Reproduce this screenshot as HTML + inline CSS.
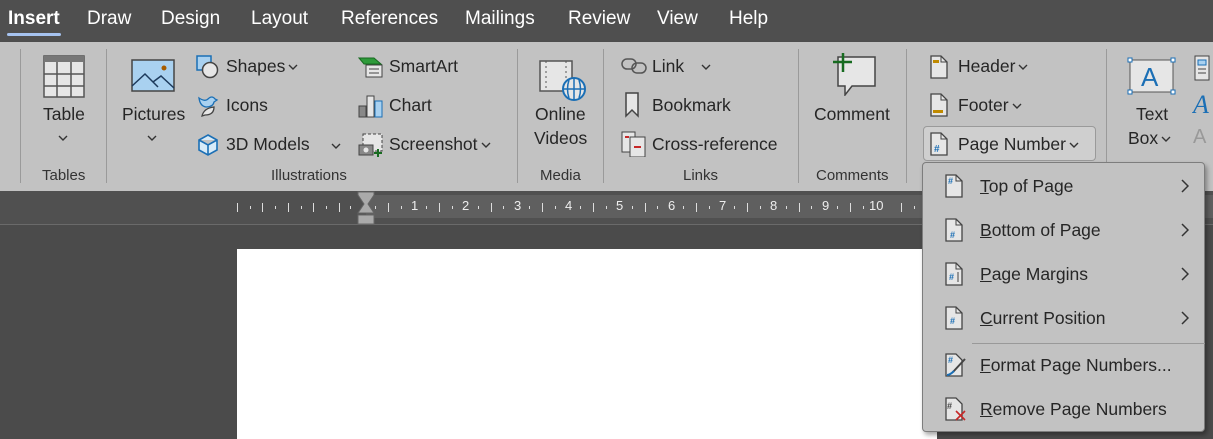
<!DOCTYPE html>
<html><head><style>
*{margin:0;padding:0;box-sizing:border-box}
body{width:1213px;height:439px;overflow:hidden;background:#4b4b4b;font-family:"Segoe UI","Liberation Sans",sans-serif;position:relative;color:#262626}
.a{position:absolute;white-space:nowrap}
.tabs{position:absolute;left:0;top:0;width:1213px;height:42px;background:#4f4f4f}
.tab{position:absolute;top:8px;font-size:19px;color:#fff}
.rib{position:absolute;left:0;top:42px;width:1213px;height:149px;background:#c2c2c2;box-shadow:0 2px 3px rgba(0,0,0,.4)}
.t{font-size:17.5px;color:#262626}
.g{font-size:15px;color:#333}
.sep{position:absolute;top:49px;width:1px;height:134px;background:#9a9a9a}
.ruler{position:absolute;left:0;top:191px;width:1213px;height:34px;background:#505050;border-bottom:1px solid #6a6a6a}
.num{position:absolute;top:198px;font-size:13px;color:#eee;font-family:"Liberation Sans",sans-serif}
.menu{position:absolute;left:922px;top:162px;width:283px;height:270px;background:#c2c2c2;border:1px solid #7d7d7d;border-radius:4px;box-shadow:2px 3px 5px rgba(0,0,0,.35)}
.mi{position:absolute;left:57px;font-size:17.5px;color:#262626}
.mi u{text-decoration:underline}
.chev{position:absolute;left:258px}
.cv{display:inline-block;vertical-align:middle;margin-left:3px}
</style></head><body>
<svg width="0" height="0" style="position:absolute"><defs><symbol id="dn" viewBox="0 0 10 6"><path d="M1 1L5 5L9 1" fill="none" stroke="#333" stroke-width="1.4"/></symbol><symbol id="rt" viewBox="0 0 8 14"><path d="M1 1L7 7L1 13" fill="none" stroke="#333" stroke-width="1.5"/></symbol></defs></svg>
<div class="tabs"></div>
<div class="tab" style="left:8px;font-weight:bold">Insert</div>
<div class="a" style="left:7px;top:33px;width:54px;height:3px;background:#a6c3f0;border-radius:2px"></div>
<div class="tab" style="left:87px">Draw</div>
<div class="tab" style="left:161px">Design</div>
<div class="tab" style="left:251px">Layout</div>
<div class="tab" style="left:341px">References</div>
<div class="tab" style="left:465px">Mailings</div>
<div class="tab" style="left:568px">Review</div>
<div class="tab" style="left:657px">View</div>
<div class="tab" style="left:729px">Help</div>

<div class="rib"></div>
<div class="sep" style="left:20px"></div>
<div class="sep" style="left:106px"></div>
<div class="sep" style="left:517px"></div>
<div class="sep" style="left:603px"></div>
<div class="sep" style="left:798px"></div>
<div class="sep" style="left:906px"></div>
<div class="sep" style="left:1106px"></div>

<!-- Table -->
<svg class="a" style="left:43px;top:55px" width="42" height="43"><rect x="1" y="1" width="40" height="41" fill="#e6e6e6" stroke="#555" stroke-width="1.5"/><rect x="1" y="1" width="40" height="6" fill="#777"/><path d="M14 7V42M28 7V42M1 19H41M1 31H41" stroke="#555" stroke-width="1.5"/></svg>
<div class="a t" style="left:43px;top:104px">Table</div>
<svg class="a" style="left:58px;top:135px" width="10" height="6"><use href="#dn"/></svg>
<div class="a g" style="left:42px;top:167px">Tables</div>

<!-- Pictures -->
<svg class="a" style="left:131px;top:59px" width="44" height="33"><rect x="1" y="1" width="42" height="31" fill="#a9d1f0" stroke="#444" stroke-width="1.5"/><path d="M1 27L14 15L27 28M22 23L30 17L43 29" fill="none" stroke="#1d3a5c" stroke-width="1.5"/><circle cx="33" cy="9" r="2.5" fill="#a65c00"/></svg>
<div class="a t" style="left:122px;top:104px">Pictures</div>
<svg class="a" style="left:147px;top:135px" width="10" height="6"><use href="#dn"/></svg>

<svg class="a" style="left:196px;top:55px" width="24" height="24"><rect x="1" y="1" width="14" height="14" fill="#a9d1f0" stroke="#1b6fb5" stroke-width="1.5"/><circle cx="14" cy="15" r="7.5" fill="#e6e6e6" stroke="#444" stroke-width="1.5"/></svg>
<div class="a t" style="left:226px;top:56px">Shapes<svg class="cv" width="10" height="6"><use href="#dn"/></svg></div>
<svg class="a" style="left:196px;top:94px" width="24" height="24"><path d="M3 4Q9 8 12 5Q16 1 19 5L21 6L18 8Q17 13 10 13Q4 12 3 4Z" fill="#a9d1f0" stroke="#1b6fb5" stroke-width="1.3"/><path d="M6 22Q8 14 18 13Q18 21 9 21Z" fill="#e6e6e6" stroke="#444" stroke-width="1.3"/></svg>
<div class="a t" style="left:226px;top:95px">Icons</div>
<svg class="a" style="left:196px;top:133px" width="24" height="24"><path d="M12 2L21 7V17L12 22L3 17V7Z M3 7L12 12L21 7M12 12V22" fill="#d8ebf8" stroke="#1b6fb5" stroke-width="1.6"/></svg>
<div class="a t" style="left:226px;top:134px">3D Models</div>
<svg class="a" style="left:331px;top:143px" width="10" height="6"><use href="#dn"/></svg>

<svg class="a" style="left:358px;top:56px" width="26" height="22"><path d="M1 2H16L23 8H6Z" fill="#2e9a3a" stroke="#176b20"/><rect x="8" y="9" width="16" height="12" fill="#e6e6e6" stroke="#444"/><path d="M11 13H21M11 17H21" stroke="#444"/></svg>
<div class="a t" style="left:389px;top:56px">SmartArt</div>
<svg class="a" style="left:358px;top:93px" width="26" height="25"><rect x="1" y="13" width="7" height="11" fill="#888" stroke="#444"/><rect x="9" y="3" width="7" height="21" fill="#e6e6e6" stroke="#444"/><rect x="17" y="8" width="7" height="16" fill="#a9d1f0" stroke="#1b6fb5"/></svg>
<div class="a t" style="left:389px;top:95px">Chart</div>
<svg class="a" style="left:358px;top:132px" width="26" height="25"><rect x="5" y="2" width="19" height="17" fill="#e6e6e6" stroke="#444" stroke-dasharray="3 2"/><rect x="1" y="13" width="14" height="10" fill="#888" stroke="#444"/><circle cx="8" cy="18" r="2.5" fill="#e6e6e6"/><path d="M20 17V25M16 21H24" stroke="#176b20" stroke-width="2"/></svg>
<div class="a t" style="left:389px;top:134px">Screenshot<svg class="cv" width="10" height="6"><use href="#dn"/></svg></div>
<div class="a g" style="left:271px;top:167px">Illustrations</div>

<!-- Media -->
<svg class="a" style="left:539px;top:60px" width="48" height="42"><rect x="1" y="1" width="32" height="30" fill="#e6e6e6" stroke="#555" stroke-width="1.5"/><path d="M7 1V31M27 1V31" stroke="#555" stroke-dasharray="2 3"/><circle cx="35" cy="29" r="11" fill="#e6e6e6" stroke="#1b6fb5" stroke-width="2"/><path d="M24 29H46M35 18V40M30 20Q27 29 30 38M40 20Q43 29 40 38" fill="none" stroke="#1b6fb5" stroke-width="1.5"/></svg>
<div class="a t" style="left:535px;top:104px">Online</div>
<div class="a t" style="left:534px;top:128px">Videos</div>
<div class="a g" style="left:540px;top:167px">Media</div>

<!-- Links -->
<svg class="a" style="left:621px;top:57px" width="28" height="18"><rect x="1" y="2" width="14" height="10" rx="5" fill="none" stroke="#555" stroke-width="1.5"/><rect x="11" y="6" width="14" height="10" rx="5" fill="none" stroke="#555" stroke-width="1.5"/></svg>
<div class="a t" style="left:652px;top:56px">Link</div>
<svg class="a" style="left:701px;top:64px" width="10" height="6"><use href="#dn"/></svg>
<svg class="a" style="left:624px;top:92px" width="16" height="26"><path d="M2 1H14V24L8 18L2 24Z" fill="#e6e6e6" stroke="#444" stroke-width="1.5"/></svg>
<div class="a t" style="left:652px;top:95px">Bookmark</div>
<svg class="a" style="left:621px;top:131px" width="28" height="26"><rect x="1" y="1" width="13" height="20" fill="#e6e6e6" stroke="#444"/><rect x="9" y="6" width="15" height="20" fill="#e6e6e6" stroke="#444"/><path d="M4 6H8M13 16H20" stroke="#c62828" stroke-width="2"/></svg>
<div class="a t" style="left:652px;top:134px">Cross-reference</div>
<div class="a g" style="left:683px;top:167px">Links</div>

<!-- Comment -->
<svg class="a" style="left:830px;top:52px" width="48" height="44"><path d="M8 5H45V34H22L15 43V34H8Z" fill="#e6e6e6" stroke="#444" stroke-width="1.5"/><path d="M13 1V20M3 10H22" stroke="#176b20" stroke-width="2.5"/></svg>
<div class="a t" style="left:814px;top:104px">Comment</div>
<div class="a g" style="left:816px;top:167px">Comments</div>

<!-- Header Footer -->
<svg class="a" style="left:930px;top:55px" width="18" height="24"><path d="M1 1H11L17 7V23H1Z" fill="#e6e6e6" stroke="#444" stroke-width="1.3"/><path d="M11 1V7H17" fill="none" stroke="#444"/><rect x="3" y="5" width="6" height="3" fill="#c08a00"/></svg>
<div class="a t" style="left:958px;top:56px">Header<svg class="cv" width="10" height="6"><use href="#dn"/></svg></div>
<svg class="a" style="left:930px;top:93px" width="18" height="24"><path d="M1 1H11L17 7V23H1Z" fill="#e6e6e6" stroke="#444" stroke-width="1.3"/><path d="M11 1V7H17" fill="none" stroke="#444"/><rect x="3" y="17" width="10" height="3" fill="#c08a00"/></svg>
<div class="a t" style="left:958px;top:95px">Footer<svg class="cv" width="10" height="6"><use href="#dn"/></svg></div>
<div class="a" style="left:923px;top:126px;width:173px;height:35px;background:#cfcfcf;border:1px solid #9a9a9a;border-radius:4px"></div>
<svg class="a" style="left:930px;top:132px" width="18" height="24"><path d="M1 1H11L17 7V23H1Z" fill="#e6e6e6" stroke="#444" stroke-width="1.3"/><path d="M11 1V7H17" fill="none" stroke="#444"/><text x="4" y="20" font-size="10" fill="#1b6fb5" font-family="Liberation Sans" font-weight="bold">#</text></svg>
<div class="a t" style="left:958px;top:134px">Page Number<svg class="cv" width="10" height="6"><use href="#dn"/></svg></div>

<!-- Text box -->
<svg class="a" style="left:1127px;top:57px" width="50" height="38"><rect x="3" y="3" width="43" height="32" fill="#e6e6e6" stroke="#555"/><rect x="1" y="1" width="4" height="4" fill="#fff" stroke="#1b6fb5"/><rect x="44" y="1" width="4" height="4" fill="#fff" stroke="#1b6fb5"/><rect x="1" y="33" width="4" height="4" fill="#fff" stroke="#1b6fb5"/><rect x="44" y="33" width="4" height="4" fill="#fff" stroke="#1b6fb5"/><text x="14" y="29" font-size="26" fill="#1b6fb5" font-family="Liberation Sans">A</text></svg>
<div class="a t" style="left:1136px;top:104px">Text</div>
<div class="a t" style="left:1128px;top:128px">Box<svg class="cv" width="10" height="6"><use href="#dn"/></svg></div>
<svg class="a" style="left:1192px;top:55px" width="21" height="90"><rect x="3" y="1" width="14" height="24" fill="#e6e6e6" stroke="#444"/><rect x="6" y="5" width="8" height="5" fill="#a9d1f0" stroke="#1b6fb5"/><path d="M6 14H14M6 18H14" stroke="#444"/><text x="1" y="58" font-size="26" font-style="italic" fill="#1b6fb5" font-family="Liberation Serif">A</text><text x="1" y="88" font-size="20" fill="#999" font-family="Liberation Sans">A</text></svg>

<!-- Ruler -->
<div class="ruler"></div>
<div class="a" style="left:366px;top:195px;width:847px;height:23px;background:#5f5f5f"></div>
<svg class="a" style="left:357px;top:191px" width="18" height="34"><path d="M1 1H17V4L11 13L17 22H1L7 13L1 4Z" fill="#aaa" stroke="#666"/><rect x="1" y="24" width="16" height="9" fill="#aaa" stroke="#666"/></svg>
<svg class="a" style="left:0;top:200px" width="930" height="16"><g stroke="#ddd" stroke-width="1">
<path d="M237.5 3V12M250.5 6V9M262.5 3V12M275.5 6V9M288.5 3V12M301.5 6V9M313.5 3V12M326.5 6V9M339.5 3V12M350.5 6V9
M375.5 6V9M388.5 3V12M401.5 6V9M426.5 6V9M439.5 3V12M452.5 6V9M478.5 6V9M491.5 3V12M503.5 6V9M529.5 6V9M542.5 3V12M555.5 6V9M580.5 6V9M593.5 3V12M606.5 6V9M632.5 6V9M645.5 3V12M657.5 6V9M683.5 6V9M696.5 3V12M709.5 6V9M734.5 6V9M747.5 3V12M760.5 6V9M786.5 6V9M799.5 3V12M811.5 6V9M837.5 6V9M850.5 3V12M863.5 6V9M901.5 3V12M914.5 6V9"/></g></svg>
<div class="num" style="left:411px">1</div><div class="num" style="left:462px">2</div><div class="num" style="left:514px">3</div><div class="num" style="left:565px">4</div><div class="num" style="left:616px">5</div><div class="num" style="left:668px">6</div><div class="num" style="left:719px">7</div><div class="num" style="left:770px">8</div><div class="num" style="left:822px">9</div><div class="num" style="left:869px">10</div>

<!-- Page -->
<div class="a" style="left:237px;top:249px;width:700px;height:190px;background:#fff"></div>

<!-- Menu -->
<div class="menu">
<svg class="a" style="left:22px;top:11px" width="18" height="24"><path d="M1 1H11L17 7V23H1Z" fill="#e6e6e6" stroke="#444" stroke-width="1.3"/><path d="M11 1V7H17" fill="none" stroke="#444"/><text x="3" y="10" font-size="9" fill="#1b6fb5" font-family="Liberation Sans" font-weight="bold">#</text></svg>
<div class="mi" style="top:13px"><u>T</u>op of Page</div><svg class="chev" style="top:16px" width="8" height="14"><use href="#rt"/></svg>
<svg class="a" style="left:22px;top:55px" width="18" height="24"><path d="M1 1H11L17 7V23H1Z" fill="#e6e6e6" stroke="#444" stroke-width="1.3"/><path d="M11 1V7H17" fill="none" stroke="#444"/><text x="5" y="20" font-size="9" fill="#1b6fb5" font-family="Liberation Sans" font-weight="bold">#</text></svg>
<div class="mi" style="top:57px"><u>B</u>ottom of Page</div><svg class="chev" style="top:60px" width="8" height="14"><use href="#rt"/></svg>
<svg class="a" style="left:22px;top:99px" width="18" height="24"><path d="M1 1H11L17 7V23H1Z" fill="#e6e6e6" stroke="#444" stroke-width="1.3"/><path d="M11 1V7H17" fill="none" stroke="#444"/><text x="4" y="18" font-size="9" fill="#1b6fb5" font-family="Liberation Sans" font-weight="bold">#</text><path d="M13 10V20" stroke="#444"/></svg>
<div class="mi" style="top:101px"><u>P</u>age Margins</div><svg class="chev" style="top:104px" width="8" height="14"><use href="#rt"/></svg>
<svg class="a" style="left:22px;top:143px" width="18" height="24"><path d="M1 1H11L17 7V23H1Z" fill="#e6e6e6" stroke="#444" stroke-width="1.3"/><path d="M11 1V7H17" fill="none" stroke="#444"/><text x="5" y="18" font-size="9" fill="#1b6fb5" font-family="Liberation Sans" font-weight="bold">#</text></svg>
<div class="mi" style="top:145px"><u>C</u>urrent Position</div><svg class="chev" style="top:148px" width="8" height="14"><use href="#rt"/></svg>
<div class="a" style="left:49px;top:180px;width:233px;height:1px;background:#999"></div>
<svg class="a" style="left:22px;top:190px" width="24" height="24"><path d="M1 1H11L17 7V23H1Z" fill="#e6e6e6" stroke="#444" stroke-width="1.3"/><text x="3" y="10" font-size="9" fill="#1b6fb5" font-family="Liberation Sans" font-weight="bold">#</text><path d="M20 6L8 19" stroke="#444" stroke-width="2"/><path d="M9 18Q5 22 2 22" stroke="#1b6fb5" stroke-width="2" fill="none"/></svg>
<div class="mi" style="top:192px"><u>F</u>ormat Page Numbers...</div>
<svg class="a" style="left:22px;top:234px" width="24" height="24"><path d="M1 1H11L17 7V23H1Z" fill="#e6e6e6" stroke="#444" stroke-width="1.3"/><text x="2" y="12" font-size="9" fill="#444" font-family="Liberation Sans" font-weight="bold">#</text><path d="M11 14L20 23M20 14L11 23" stroke="#c62828" stroke-width="1.6"/></svg>
<div class="mi" style="top:236px"><u>R</u>emove Page Numbers</div>
</div>
</body></html>
